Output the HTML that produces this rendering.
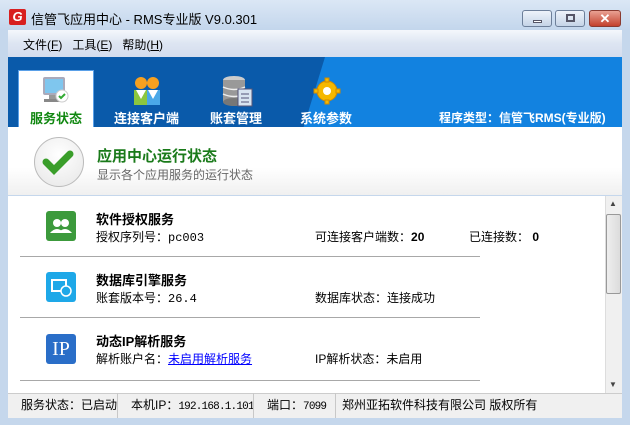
<!DOCTYPE html>
<html><head><meta charset="utf-8"><style>
*{margin:0;padding:0;box-sizing:border-box}
body{width:630px;height:425px;overflow:hidden;background:#c5d7ec;font-family:"Liberation Sans","Noto Sans CJK SC",sans-serif;font-size:12px;position:relative}
.a{position:absolute;white-space:nowrap}
.title{left:0;top:0;width:630px;height:30px;background:linear-gradient(#dbe7f5,#c3d6ec)}
.b{font-weight:bold}
.tab{color:#fff;font-weight:bold;font-size:13px;position:absolute;top:108px;white-space:nowrap}
.mono{font-family:"Liberation Mono","Noto Sans CJK SC",monospace}
.sm{font-size:11px;letter-spacing:-0.8px}
.sep{position:absolute;left:20px;width:460px;height:1px;background:#a8a8a8}
.sb{position:absolute;top:393px;height:25px;line-height:25px;font-size:12px;border-right:1px solid #c8c8c8;white-space:nowrap;overflow:hidden}
</style></head><body>
<div class="a title"></div>
<div class="a" style="left:9px;top:9px;width:17px;height:16px;background:#d82020;border-radius:2px;color:#fff;font-weight:bold;font-size:13px;line-height:16px;text-align:center;font-style:italic">G</div>
<div class="a" style="left:31px;top:9px;font-size:13px;color:#000">信管飞应用中心 - RMS专业版 V9.0.301</div>
<div class="a" style="left:522px;top:10px;width:30px;height:17px;border:1px solid #6d7f99;border-radius:3px;background:linear-gradient(#eef3fa,#c5d4e7)"><div class="a" style="left:10px;top:9px;width:9px;height:3px;background:#fff;border:1px solid #556"></div></div>
<div class="a" style="left:555px;top:10px;width:30px;height:17px;border:1px solid #6d7f99;border-radius:3px;background:linear-gradient(#eef3fa,#c5d4e7)"><div class="a" style="left:10px;top:3px;width:9px;height:8px;border:2px solid #556"></div></div>
<div class="a" style="left:589px;top:10px;width:32px;height:17px;border:1px solid #8a3a30;border-radius:3px;background:linear-gradient(#e9a193,#c3412d);color:#fff;font-weight:bold;text-align:center;line-height:15px;font-size:13px">✕</div>
<div class="a" style="left:8px;top:30px;width:614px;height:27px;background:linear-gradient(#f4f7fc,#dde5f2 50%,#d4ddee)"></div>
<div class="a" style="left:23px;top:36px;font-size:12px">文件(<u>F</u>)&nbsp;&nbsp; 工具(<u>E</u>)&nbsp;&nbsp; 帮助(<u>H</u>)</div>
<div class="a" style="left:8px;top:57px;width:614px;height:70px;background:#0a5aaa;overflow:hidden"><div class="a" style="left:317px;top:0;width:330px;height:70px;background:#1282e0;transform:skewX(-17deg);transform-origin:0 0"></div></div>
<div class="a" style="left:18px;top:70px;width:76px;height:57px;background:#fff;border:1px solid #5aa0e8;border-bottom:none"></div>
<svg class="a" style="left:40px;top:75px" width="30" height="32"><rect x="3" y="2" width="22" height="18" rx="2" fill="#aab" /><rect x="5" y="4" width="18" height="14" fill="#7fc6ee"/><rect x="9" y="20" width="10" height="4" fill="#999"/><rect x="4" y="24" width="20" height="3" fill="#888"/><circle cx="22" cy="21" r="6" fill="#fff" stroke="#ccc"/><path d="M19 21l2 2 4-4" stroke="#3a3" stroke-width="2" fill="none"/></svg>
<div class="tab" style="left:30px;color:#118811">服务状态</div>
<svg class="a" style="left:131px;top:75px" width="32" height="32"><circle cx="10" cy="8" r="6" fill="#f6a020"/><circle cx="22" cy="8" r="6" fill="#f6a020"/><rect x="3" y="15" width="13" height="15" fill="#8cc63f"/><rect x="16" y="15" width="13" height="15" fill="#4aa8e8"/><path d="M5 15l5 9 5-9M17 15l5 9 5-9" fill="#fff"/></svg>
<div class="tab" style="left:114px">连接客户端</div>
<svg class="a" style="left:220px;top:74px" width="34" height="34"><ellipse cx="14" cy="6" rx="11" ry="4" fill="#ccc"/><rect x="3" y="6" width="22" height="22" fill="#999"/><ellipse cx="14" cy="28" rx="11" ry="4" fill="#777"/><path d="M3 13q11 5 22 0M3 20q11 5 22 0" stroke="#eee" stroke-width="1.5" fill="none"/><rect x="18" y="15" width="14" height="17" fill="#d8e4f0" stroke="#557"/><path d="M21 20h8M21 24h8M21 28h8" stroke="#557"/></svg>
<div class="tab" style="left:210px">账套管理</div>
<svg class="a" style="left:312px;top:76px" width="30" height="30"><g fill="#f5b800" stroke="#d08a00"><circle cx="15" cy="15" r="10"/><path d="M13 2h4v4h-4zM13 24h4v4h-4zM2 13h4v4H2zM24 13h4v4h-4z"/></g><circle cx="15" cy="15" r="4" fill="#fff"/></svg>
<div class="tab" style="left:300px">系统参数</div>
<div class="tab" style="left:439px;font-size:12px;top:109px">程序类型：信管飞RMS(专业版)</div>
<div class="a" style="left:8px;top:127px;width:614px;height:68px;background:linear-gradient(#fff 60%,#f0f0f0)"></div>
<div class="a" style="left:34px;top:137px;width:50px;height:50px;border-radius:50%;background:radial-gradient(circle at 50% 35%,#fff,#e6e6e6);border:1px solid #bbb"></div>
<svg class="a" style="left:42px;top:147px" width="34" height="30"><path d="M4 15l8 8 16-16" stroke="#3a9e2a" stroke-width="7" fill="none" stroke-linecap="round"/></svg>
<div class="a b" style="left:97px;top:145px;font-size:15px;color:#1a7a1a">应用中心运行状态</div>
<div class="a" style="left:97px;top:166px;color:#666">显示各个应用服务的运行状态</div>
<div class="a" style="left:8px;top:196px;width:598px;height:197px;background:#fff"></div>
<div class="a" style="left:605px;top:196px;width:17px;height:197px;background:#f0f0f0;border-left:1px solid #ddd"></div>
<div class="a" style="left:606px;top:214px;width:15px;height:80px;background:linear-gradient(90deg,#eee,#dcdcdc);border:1px solid #999;border-radius:2px"></div>
<div class="a" style="left:609px;top:199px;font-size:8px;color:#444">▲</div>
<div class="a" style="left:609px;top:380px;font-size:8px;color:#444">▼</div>
<div class="a" style="left:46px;top:211px;width:30px;height:30px;background:#3c9a3c;border-radius:3px"><svg width="30" height="30"><circle cx="11" cy="12" r="4" fill="#fff"/><circle cx="19" cy="12" r="4" fill="#fff"/><path d="M4 22q7-8 14 0zM12 22q7-8 14 0z" fill="#fff"/></svg></div>
<div class="a b" style="left:96px;top:209px;font-size:13px">软件授权服务</div>
<div class="a" style="left:96px;top:228px">授权序列号：<span class="mono">pc003</span></div>
<div class="a" style="left:315px;top:228px">可连接客户端数：<b>20</b></div>
<div class="a" style="left:469px;top:228px">已连接数： <b>0</b></div>
<div class="sep" style="top:256px"></div>
<div class="a" style="left:46px;top:272px;width:30px;height:30px;background:#1ea8e8;border-radius:3px"><svg width="30" height="30"><rect x="6" y="8" width="14" height="11" fill="none" stroke="#fff" stroke-width="2"/><circle cx="20" cy="19" r="5" fill="#1ea8e8" stroke="#fff" stroke-width="1.5"/></svg></div>
<div class="a b" style="left:96px;top:270px;font-size:13px">数据库引擎服务</div>
<div class="a" style="left:96px;top:289px">账套版本号：<span class="mono">26.4</span></div>
<div class="a" style="left:315px;top:289px">数据库状态：连接成功</div>
<div class="sep" style="top:317px"></div>
<div class="a" style="left:46px;top:334px;width:30px;height:30px;background:#2a6ec8;border-radius:3px;color:#fff;font-family:'Liberation Serif',serif;font-size:20px;line-height:30px;text-align:center">IP</div>
<div class="a b" style="left:96px;top:331px;font-size:13px">动态IP解析服务</div>
<div class="a" style="left:96px;top:350px">解析账户名：<span style="color:#00f;text-decoration:underline">未启用解析服务</span></div>
<div class="a" style="left:315px;top:350px">IP解析状态：未启用</div>
<div class="sep" style="top:380px"></div>
<div class="a" style="left:8px;top:393px;width:614px;height:25px;background:#f0f0f0;border-top:1px solid #ccc"></div>
<div class="sb" style="left:8px;width:110px;padding-left:13px">服务状态：已启动</div>
<div class="sb" style="left:118px;width:136px;padding-left:13px">本机IP：<span class="mono sm">192.168.1.101</span></div>
<div class="sb" style="left:254px;width:82px;padding-left:13px">端口：<span class="mono sm">7099</span></div>
<div class="sb" style="left:336px;width:270px;padding-left:6px;border:none">郑州亚拓软件科技有限公司 版权所有</div>
</body></html>
